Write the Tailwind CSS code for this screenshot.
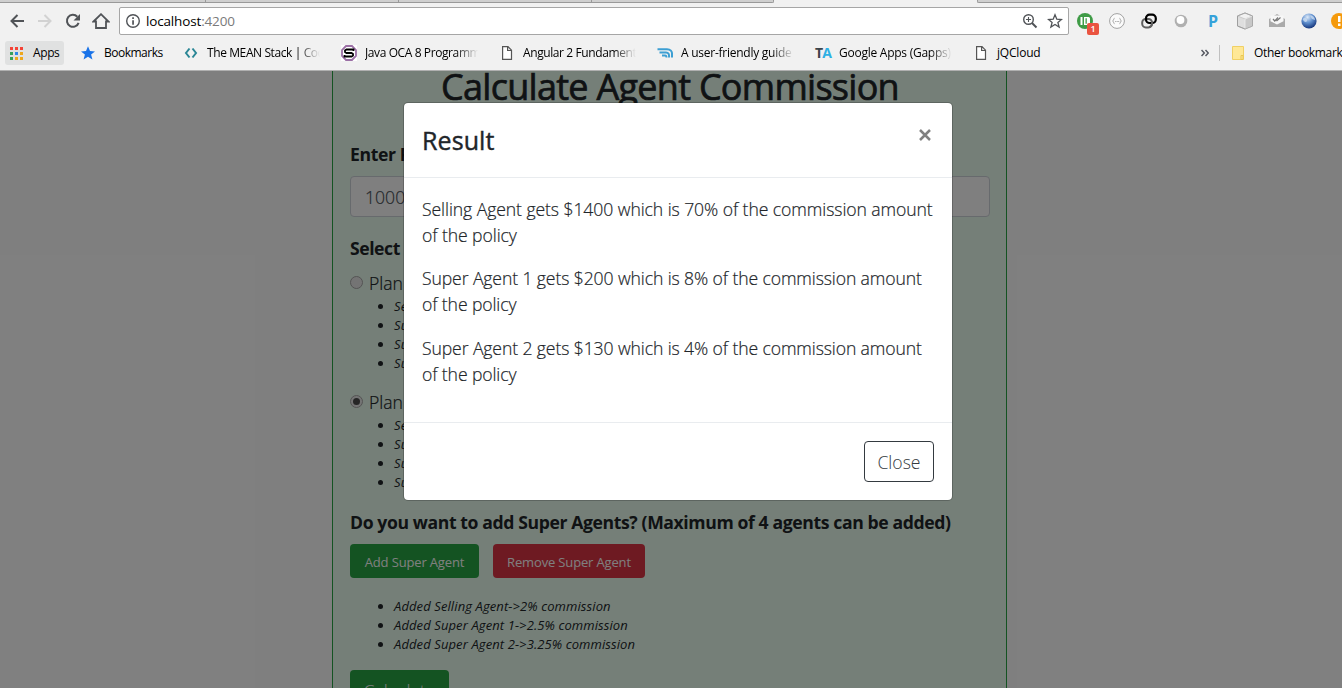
<!DOCTYPE html>
<html lang="en">
<head>
<meta charset="utf-8">
<title>Calculate Agent Commission</title>
<script src="https://cdn.jsdelivr.net/npm/@tailwindcss/browser@4"></script>
</head>
<body class="w-[1342px] h-[688px] overflow-hidden flex flex-col bg-white font-['Open_Sans',sans-serif] text-[#212529]">
<!-- Browser chrome -->
<header class="h-[71px] shrink-0 bg-[#f1f1f1] border-b border-[#b0b0b0] flex flex-col overflow-hidden">
  <div class="h-[3px] shrink-0 flex">
    <div class="w-[206px] bg-[#cfcfcf] border-b border-r border-[#999]"></div>
    <div class="w-[193px] bg-[#cfcfcf] border-b border-r border-[#999]"></div>
    <div class="w-[193px] bg-[#cfcfcf] border-b border-r border-[#999]"></div>
    <div class="w-[182px] bg-[#cfcfcf] border-b border-r border-[#999] rounded-br-[2px]"></div>
    <div class="w-[203px]"></div>
    <div class="flex-1 bg-[#cfcfcf] border-b border-l border-[#999] rounded-bl-[2px]"></div>
  </div>
  <div class="h-9 shrink-0 flex items-center">
    <div class="w-[119px] shrink-0 flex items-center pl-[9px] gap-3">
      <svg class="size-4 shrink-0" viewBox="0 0 16 16" fill="none" stroke="#505357" stroke-width="2"><path d="M15 8H3M8.500 2L2.500 8L8.500 14"/></svg>
      <svg class="size-4 shrink-0" viewBox="0 0 16 16" fill="none" stroke="#d2d2d2" stroke-width="2"><path d="M1 8H13M7.500 2L13.500 8L7.500 14"/></svg>
      <svg class="size-4 shrink-0" viewBox="0 0 16 16"><path d="M13.600 9.800A6 6 0 1 1 12.300 3.700" fill="none" stroke="#505357" stroke-width="2"/><path d="M15 1V7.500H8.500Z" fill="#505357"/></svg>
      <svg class="w-[18px] h-4 shrink-0 -ml-px" viewBox="0 0 18 16" fill="none" stroke="#505357" stroke-width="1.800"><path d="M1.500 8.500L9 1.200L16.500 8.500H14V15H4V8.500Z"/></svg>
    </div>
    <div class="w-[950px] h-7 shrink-0 bg-white border border-[#a6a6a6] rounded-[2px] flex items-center pl-[5px] pr-[5px]">
      <svg class="size-4 shrink-0" viewBox="0 0 16 16"><circle cx="8" cy="8" r="6.300" fill="none" stroke="#505357" stroke-width="1.400"/><path d="M7.200 4.300h1.700v1.700H7.200zM7.200 7.200h1.700v4.600H7.200z" fill="#505357"/></svg>
      <div class="ml-[5px] text-[13.500px] leading-5 tracking-[-0.16px] text-black whitespace-nowrap">localhost<span class="text-[#7a7a7a]">:4200</span></div>
      <svg class="size-4 ml-auto shrink-0" viewBox="0 0 16 16" fill="none" stroke="#505357" stroke-width="1.400"><circle cx="6.500" cy="6.500" r="4.800"/><path d="M10 10L14.500 14.500" stroke-width="1.900"/><path d="M4 6.500h5M6.500 4v5" stroke-width="1.100"/></svg>
      <svg class="size-4 ml-[9px] shrink-0" viewBox="0 0 16 16" fill="none" stroke="#505357" stroke-width="1.300"><path d="M8 1.800L9.800 6.200L14.500 6.500L10.900 9.500L12.100 14L8 11.500L3.900 14L5.100 9.500L1.500 6.500L6.200 6.200Z"/></svg>
    </div>
    <div class="flex shrink-0">
      <div class="w-8 h-7 shrink-0 relative flex items-center justify-center">
        <svg class="size-4" viewBox="0 0 16 16"><circle cx="8" cy="8" r="8" fill="#3f9b46"/><path d="M3.500 4h2v8h-2zM7 4h4.500a1.500 1.500 0 0 1 1.500 1.500v5a1.500 1.500 0 0 1-1.500 1.500H7z" fill="#fff"/><path d="M8.500 5.300h1.300v5.400H8.500z" fill="#3f9b46"/></svg>
        <span class="absolute left-[18px] top-4 w-3 h-3 rounded-[2px] bg-[#ea5440] text-white text-[9px] leading-3 font-semibold text-center">1</span>
      </div>
      <div class="w-8 h-7 shrink-0 flex items-center justify-center"><svg class="size-4" viewBox="0 0 16 16" fill="none" stroke="#a2a2a2"><circle cx="8" cy="8" r="7.400" fill="#fbfbfb"/><path d="M5.500 5.300C4.200 5.300 5.200 7.500 3.600 8C5.200 8.500 4.200 10.700 5.500 10.700M10.500 5.300C11.800 5.300 10.800 7.500 12.400 8C10.800 8.500 11.800 10.700 10.500 10.700"/><path d="M6.200 8.500h4" stroke-dasharray="1 .5"/></svg></div>
      <div class="w-8 h-7 shrink-0 flex items-center justify-center"><svg class="size-4" viewBox="0 0 16 16" fill="none"><rect x="1.200" y="6" width="9.800" height="8.400" rx="3.600" stroke="#606060" stroke-width="2"/><rect x="5" y="1.600" width="9.800" height="8.400" rx="3.600" stroke="#000" stroke-width="2.200"/><path d="M11 8.500v1.800c0 2-1 3.500-3 4" stroke="#606060" stroke-width="2"/></svg></div>
      <div class="w-8 h-7 shrink-0 flex items-center justify-center"><svg class="size-3.5" viewBox="0 0 14 14"><circle cx="7" cy="7" r="6.300" fill="#b0b0b0"/><circle cx="6.500" cy="6" r="3.900" fill="#fff"/></svg></div>
      <div class="w-8 h-7 shrink-0 flex items-center justify-center text-[16px] font-bold text-[#36a2da]">P</div>
      <div class="w-8 h-7 shrink-0 flex items-center justify-center"><svg class="size-[18px]" viewBox="0 0 18 18" stroke="#9a9a9a" stroke-width=".8"><path d="M9 1L16.500 4V14L9 17L1.500 14V4Z" fill="#dedede"/><path d="M1.500 4L9 7L16.500 4L9 1Z" fill="#f2f2f2" stroke="#c4c4c4"/><path d="M9 7V17L16.500 14V4Z" fill="#c8c8c8" stroke="#eee"/><path d="M9 1L16.500 4V14L9 17L1.500 14V4Z" fill="none"/></svg></div>
      <div class="w-8 h-7 shrink-0 flex items-center justify-center"><svg class="size-4" viewBox="0 0 16 16"><path d="M0 6L8 1L16 6V14H0Z" fill="#aaa"/><path d="M1.500 2.500h13V8.200L8 11.500L1.500 8.200Z" fill="#f7f7f7"/><path d="M4 6l1.800 2L9 4.500M7.500 8L11.500 4.500" fill="none" stroke="#777" stroke-width="1.200"/></svg></div>
      <div class="w-8 h-7 shrink-0 flex items-center justify-center"><svg class="size-4" viewBox="0 0 16 16"><defs><radialGradient id="globe" cx=".4" cy=".25" r=".75"><stop offset="0" stop-color="#dce9f8"/><stop offset=".5" stop-color="#5f8fce"/><stop offset="1" stop-color="#17377d"/></radialGradient></defs><circle cx="8" cy="8" r="7.600" fill="url(#globe)"/><path d="M1.500 6C4 3.500 7 6 6 8S3 9 1.500 6zM9 2.500c3 0 5 2 5 4.500l-3-1z" fill="#cfdff2" opacity=".75"/></svg></div>
      <div class="w-8 h-7 shrink-0 flex items-center justify-center"><svg class="size-5 -ml-1" viewBox="0 0 20 20"><circle cx="10" cy="10" r="8" fill="#f59a0c"/><path d="M9 5h2.500v6H9zM9 12.500h2.500V15H9z" fill="#fff"/></svg></div>
    </div>
  </div>
  <!-- Bookmarks bar -->
  <nav class="h-7 shrink-0 flex items-center text-[12px] leading-4 tracking-[-0.4px] text-black whitespace-nowrap">
    <div class="ml-[5px] mr-4 w-[59px] h-6 shrink-0 rounded-[3px] bg-[#e0e1e1] flex items-center pl-[5px]">
      <svg class="w-[13px] h-[13px] shrink-0 mr-2.5" viewBox="0 0 13 13"><path d="M0 0h3v3H0zM5 0h3v3H5zM10 0h3v3h-3z" fill="#f44336"/><path d="M0 5h3v3H0z" fill="#38a15c"/><path d="M5 5h3v3H5z" fill="#2f87e8"/><path d="M10 5h3v3h-3z" fill="#eea71c"/><path d="M0 10h3v3H0z" fill="#38a15c"/><path d="M5 10h3v3H5zM10 10h3v3h-3z" fill="#eea71c"/></svg>
      <span>Apps</span>
    </div>
    <div class="w-[103px] shrink-0 flex items-center gap-2"><svg class="size-4 shrink-0" viewBox="0 0 16 16"><path d="M8 1.300L10 6.100L15 6.400L11.100 9.500L12.400 14.500L8 11.800L3.600 14.500L4.900 9.500L1 6.400L6 6.100Z" fill="#1a73e8"/></svg><span class="tracking-[-0.5px]">Bookmarks</span></div>
    <div class="w-[158px] shrink-0 flex items-center gap-2"><svg class="size-4 shrink-0" viewBox="0 0 16 16" fill="none" stroke="#2a8695" stroke-width="2"><path d="M6.500 3.500L3 8L6.500 12.500M9.500 3.500L13 8L9.500 12.500"/></svg><div class="w-[113px] overflow-hidden mask-r-from-80%">The MEAN Stack | Cod</div></div>
    <div class="w-[158px] shrink-0 flex items-center gap-2"><svg class="size-4 shrink-0" viewBox="0 0 16 16"><path d="M0 0h16v16H0z" fill="#fff"/><path d="M5 1h6l4 4v6l-4 4H5l-4-4V5z" fill="#fff" stroke="#9b6fa5" stroke-width="1.800"/><path d="M12.500 6V4.500H5.500L4 5.500V7L5.500 8H10.500L12 9V10.500L10.500 11.500H3.500V10" fill="none" stroke="#000" stroke-width="1.800"/></svg><div class="w-[113px] overflow-hidden mask-r-from-80%">Java OCA 8 Programm</div></div>
    <div class="w-[158px] shrink-0 flex items-center gap-2"><svg class="size-4 shrink-0" viewBox="0 0 16 16" fill="#fff" stroke="#555" stroke-width="1.200"><path d="M3.600 1.600H9L12.500 5.200V14.400H3.600ZM8.600 1.600V5.500H12.500"/></svg><div class="w-[113px] overflow-hidden mask-r-from-80%">Angular 2 Fundament</div></div>
    <div class="w-[158px] shrink-0 flex items-center gap-2"><svg class="size-4 shrink-0" viewBox="0 0 16 16" fill="none" stroke="#3d9fd3" stroke-width="2"><path d="M.500 4.200H10C13.500 4.200 15.200 6.500 15 9V12.500M2.500 7.400H9C11.500 7.400 12.300 9 12 12.500M5 10.400H8C9.200 10.400 9.500 11 9.500 12.500"/></svg><div class="w-[113px] overflow-hidden mask-r-from-80% tracking-[-0.25px]">A user-friendly guide</div></div>
    <div class="w-[158px] shrink-0 flex items-center gap-2"><span class="w-4 shrink-0 text-[14px] font-bold tracking-[-0.8px] text-[#3b444b] flex">T<span class="text-[#2eb0e4]">A</span></span><div class="w-[113px] overflow-hidden mask-r-from-80% tracking-[-0.25px]">Google Apps (Gapps)</div></div>
    <div class="w-[228px] shrink-0 flex items-center gap-2"><svg class="size-4 shrink-0" viewBox="0 0 16 16" fill="#fff" stroke="#555" stroke-width="1.200"><path d="M3.600 1.600H9L12.500 5.200V14.400H3.600ZM8.600 1.600V5.500H12.500"/></svg><span class="tracking-[-0.2px]">jQCloud</span></div>
    <svg class="w-2 h-2 shrink-0" viewBox="0 0 8 8" fill="none" stroke="#555861" stroke-width="1.500"><path d="M.500 1L3.300 4L.500 7M4.500 1L7.300 4L4.500 7"/></svg>
    <div class="ml-2.5 w-px h-4 shrink-0 bg-[#c0c0c0]"></div>
    <svg class="ml-3 w-3 h-3.5 shrink-0" viewBox="0 0 12 14"><path d="M.500.500h11v13H.500z" fill="#ffe896" stroke="#f0d065"/><path d="M9 9.500h2v4H9z" fill="#ffe896" stroke="#e9c752"/></svg>
    <span class="ml-2.5 tracking-[-0.3px]">Other bookmarks</span>
  </nav>
</header>

<!-- Page -->
<main class="h-[617px] relative overflow-hidden">
  <section class="ml-[332px] w-[675px] h-[617px] overflow-hidden border-x border-[#28a745] bg-[#eafff0] pl-[17px] pr-4 text-[17.6px] leading-[26px]">
    <h1 class="pt-[2px] text-center text-[36px] leading-7 tracking-[-0.72px] [-webkit-text-stroke:0.7px] whitespace-nowrap">Calculate Agent Commission</h1>
    <div class="mt-10 font-bold tracking-[-0.375px]">Enter Policy Amount</div>
    <div class="mt-[9px] h-[41px] rounded-[4px] border border-[#ced4da] bg-white pl-3.5 leading-10 font-light text-[#495057] [-webkit-text-stroke:0.2px]">100000</div>
    <div class="mt-[18px] font-bold tracking-[-0.45px]">Select Plan</div>
    <div class="mt-[9px] flex items-center font-light [-webkit-text-stroke:0.2px]"><span class="size-[13px] -mt-px rounded-full border border-[#a8a8a8] bg-[#e9e9e9] mr-[6px]"></span>Plan A</div>
    <ul class="list-disc pl-11 pt-px text-[13px] leading-[19px] tracking-[0.14px] italic">
      <li>Selling Agent</li><li>Super Agent 1</li><li>Super Agent 2</li><li>Super Agent 3</li>
    </ul>
    <div class="mt-4 flex items-center font-light [-webkit-text-stroke:0.2px]"><span class="size-[13px] -mt-px rounded-full border border-[#a8a8a8] bg-[#e9e9e9] mr-[6px] flex items-center justify-center"><span class="size-[7px] rounded-full bg-[#4c4c4c]"></span></span>Plan B</div>
    <ul class="list-disc pl-11 pt-px text-[13px] leading-[19px] tracking-[0.14px] italic">
      <li>Selling Agent</li><li>Super Agent 1</li><li>Super Agent 2</li><li>Super Agent 3</li>
    </ul>
    <div class="mt-[17px] font-bold tracking-[-0.385px] whitespace-nowrap">Do you want to add Super Agents? (Maximum of 4 agents can be added)</div>
    <div class="mt-[9px] flex gap-[14px] text-[13px] text-white whitespace-nowrap tracking-[-0.15px]">
      <div class="w-[129px] h-[34px] rounded-[4px] bg-[#28a745] flex items-center justify-center pt-px">Add Super Agent</div>
      <div class="w-[152px] h-[34px] rounded-[4px] bg-[#dc3545] flex items-center justify-center pt-px">Remove Super Agent</div>
    </div>
    <ul class="mt-[19px] list-disc pl-11 text-[13px] leading-[19px] tracking-[0.1px] italic">
      <li>Added Selling Agent-&gt;2% commission</li><li>Added Super Agent 1-&gt;2.5% commission</li><li>Added Super Agent 2-&gt;3.25% commission</li>
    </ul>
    <div class="mt-4 w-[99px] h-[41px] rounded-[4px] bg-[#28a745] text-white text-center font-light leading-[42px]">Calculate</div>
  </section>

  <div class="absolute inset-0 bg-black/50"></div>

  <!-- Result dialog -->
  <div class="absolute left-[403px] top-[31px] w-[550px] h-[399px] rounded-[5px] border border-black/20 bg-white bg-clip-padding flex flex-col text-[17.6px] leading-[26px] font-light">
    <div class="h-[75px] shrink-0 border-b border-[#e9ecef] flex justify-between pl-[18px] pr-[21px] pt-5 whitespace-nowrap">
      <h5 class="text-[25px] leading-[34px] font-normal tracking-[0.1px] [-webkit-text-stroke:0.4px]">Result</h5>
      <svg class="w-3 h-3 mt-1.5" viewBox="0 0 12 12" fill="none" stroke="#808080" stroke-width="2.500"><path d="M1 1L11 11M11 1L1 11"/></svg>
    </div>
    <div class="flex-1 pl-[18px] pt-[18px] whitespace-nowrap tracking-[-0.11px] [-webkit-text-stroke:0.2px]">
      <p class="tracking-[-0.08px]">Selling Agent gets $1400 which is 70% of the commission amount<br>of the policy</p>
      <p class="mt-[17px]">Super Agent 1 gets $200 which is 8% of the commission amount<br>of the policy</p>
      <p class="mt-[18px]">Super Agent 2 gets $130 which is 4% of the commission amount<br>of the policy</p>
    </div>
    <div class="h-[78px] shrink-0 border-t border-[#e9ecef] flex justify-end pr-[18px] pt-[18px]">
      <div class="w-[70px] h-[41px] rounded-[4px] border border-[#343a40] text-[#343a40] text-center leading-10">Close</div>
    </div>
  </div>
</main>
</body>
</html>
